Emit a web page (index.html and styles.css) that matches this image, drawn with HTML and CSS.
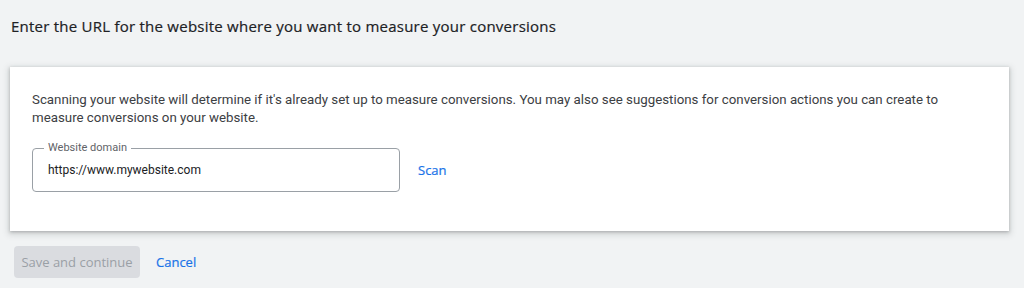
FILE: index.html
```html
<!DOCTYPE html>
<html lang="en">
<head>
<meta charset="utf-8">
<title>Conversions</title>
<link rel="stylesheet" href="styles.css">
</head>
<body>
<div class="page">
  <h1 class="title">Enter the URL for the website where you want to measure your conversions</h1>
  <section class="card">
    <p class="desc">Scanning your website will determine if it's already set up to measure conversions. You may also see suggestions for conversion actions you can create to measure conversions on your website.</p>
    <div class="field-row">
      <div class="field">
        <span class="field-label">Website domain</span>
        <span class="field-value">https://www.mywebsite.com</span>
      </div>
      <a class="text-btn scan">Scan</a>
    </div>
  </section>
  <div class="actions">
    <button class="btn-disabled" disabled>Save and continue</button>
    <a class="text-btn cancel">Cancel</a>
  </div>
</div>
</body>
</html>
```

FILE: styles.css
```css
html, body {
  margin: 0;
  padding: 0;
  background: #f1f3f4;
  width: 1024px;
  height: 288px;
  overflow: hidden;
}
.page {
  font-family: Roboto, "Liberation Sans", sans-serif;
  color: #3c4043;
  padding: 0 15px 0 10px;
}
.title {
  margin: 0;
  padding-top: 16px;
  padding-left: 1px;
  font-family: "Open Sans", Roboto, sans-serif;
  font-size: 15px;
  font-weight: 500;
  letter-spacing: 0.24px;
  line-height: 20px;
  color: #202124;
  -webkit-text-stroke: 0.2px #202124;
}
.card {
  margin-top: 31px;
  background: #fff;
  height: 164px;
  box-sizing: border-box;
  padding: 24px 22px 0 22px;
  box-shadow: 0 1px 3px rgba(60,64,67,0.3), 0 2px 6px 2px rgba(60,64,67,0.15);
}
.desc {
  margin: 0;
  font-size: 13.3px;
  line-height: 17.5px;
  color: #3c4043;
}
.field-row {
  display: flex;
  align-items: center;
  margin-top: 22px;
  gap: 18px;
}
.field {
  width: 368px;
  height: 44px;
  box-sizing: border-box;
  padding: 0 15px;
  border: 1px solid #9aa0a6;
  border-radius: 4px;
  display: flex;
  align-items: center;
  position: relative;
}
.field-label {
  position: absolute;
  left: 11px;
  top: -7px;
  padding: 0 4px;
  background: #fff;
  font-size: 11px;
  line-height: 12px;
  color: #5f6368;
}
.field-value {
  font-size: 12px;
  color: #202124;
}
.text-btn {
  color: #1a73e8;
  font-family: "Open Sans", Roboto, sans-serif;
  font-weight: 500;
  font-size: 13px;
  -webkit-text-stroke: 0.2px #1a73e8;
  cursor: pointer;
}
.actions {
  display: flex;
  align-items: center;
  margin-top: 15px;
  padding-left: 4px;
  gap: 16px;
}
.btn-disabled {
  width: 126px;
  height: 32px;
  border: none;
  border-radius: 4px;
  background: #dadce0;
  color: #9aa0a6;
  font-family: "Open Sans", Roboto, sans-serif;
  font-weight: 500;
  font-size: 13px;
  padding: 0;
}
```
